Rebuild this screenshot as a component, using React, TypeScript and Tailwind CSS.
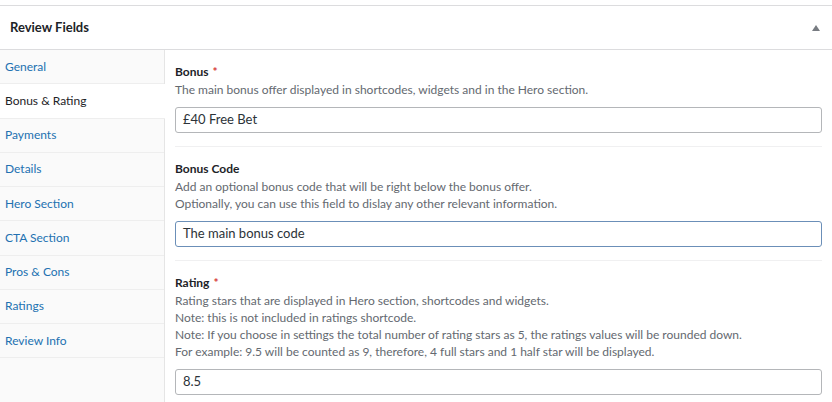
import React from 'react';

const tabs = [
  'General',
  'Bonus & Rating',
  'Payments',
  'Details',
  'Hero Section',
  'CTA Section',
  'Pros & Cons',
  'Ratings',
  'Review Info',
];

const Field = ({
  label,
  required,
  lines,
  value,
  focused,
}: {
  label: string;
  required?: boolean;
  lines: string[];
  value: string;
  focused?: boolean;
}) => (
  <div className="pt-[13px] pb-[13px] border-b border-[#f0f0f1]">
    <div className="text-[12px] leading-[18px] font-bold text-[#1d2327]">
      {label}
      {required && <span className="text-[#d63638] ml-[4px]">*</span>}
    </div>
    {lines.map((l) => (
      <div key={l} className="text-[12px] leading-[17px] text-[#646970]">
        {l}
      </div>
    ))}
    <div
      className={`mt-[9px] h-[26px] rounded-[3px] bg-white flex items-center px-[7px] text-[13px] text-[#2c3338] border ${
        focused ? 'border-[#6b8fb8]' : 'border-[#b4b6b9]'
      }`}
    >
      {value}
    </div>
  </div>
);

export default function App() {
  return (
    <div
      className="w-[832px] h-[402px] overflow-hidden bg-white"
      style={{ fontFamily: 'Lato, "Noto Sans", Arial, sans-serif' }}
    >
      <div className="h-[5px]" />
      <div className="border-t border-[#dcdcde] h-[45px] border-b flex items-center justify-between pl-[10px] pr-[12px]">
        <span className="text-[13px] font-bold text-[#1d2327]">Review Fields</span>
        <svg width="8" height="6" viewBox="0 0 8 6">
          <path d="M4 0 L8 6 L0 6 Z" fill="#787c82" />
        </svg>
      </div>
      <div className="flex">
        <div className="w-[165px] shrink-0 bg-[#fafafa] border-r border-[#e5e5e5] h-[352px]">
          {tabs.map((t) => {
            const active = t === 'Bonus & Rating';
            return (
              <div
                key={t}
                className={`h-[34.25px] flex items-center pl-[5px] text-[12px] border-b border-[#eeeeee] relative ${
                  active ? 'bg-white text-[#1d2327] -mr-px' : 'text-[#2271b1]'
                }`}
              >
                {t}
              </div>
            );
          })}
        </div>
        <div className="flex-1 pl-[10px] pr-[10px]">
          <Field
            label="Bonus"
            required
            lines={['The main bonus offer displayed in shortcodes, widgets and in the Hero section.']}
            value="£40 Free Bet"
          />
          <Field
            label="Bonus Code"
            lines={[
              'Add an optional bonus code that will be right below the bonus offer.',
              'Optionally, you can use this field to dislay any other relevant information.',
            ]}
            value="The main bonus code"
            focused
          />
          <Field
            label="Rating"
            required
            lines={[
              'Rating stars that are displayed in Hero section, shortcodes and widgets.',
              'Note: this is not included in ratings shortcode.',
              'Note: If you choose in settings the total number of rating stars as 5, the ratings values will be rounded down.',
              'For example: 9.5 will be counted as 9, therefore, 4 full stars and 1 half star will be displayed.',
            ]}
            value="8.5"
          />
        </div>
      </div>
    </div>
  );
}
